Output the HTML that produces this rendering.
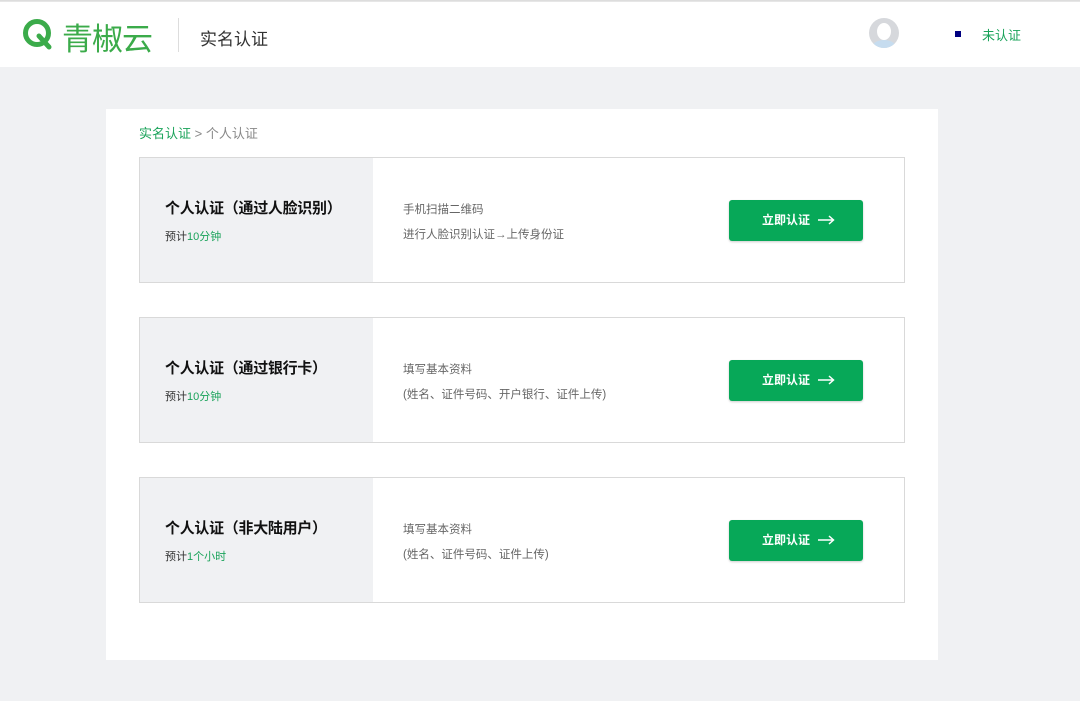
<!DOCTYPE html>
<html><head><meta charset="utf-8"><style>
*{margin:0;padding:0;box-sizing:border-box}
body{width:1080px;height:701px;background:#f0f1f3;font-family:"Liberation Sans","Noto Sans CJK SC",sans-serif;position:relative;overflow:hidden}
.hdr{position:absolute;left:0;top:1px;width:1080px;height:66px;background:#fff;border-top:1px solid #e6e6e6}
.top{position:absolute;left:0;top:0;width:1080px;height:1px;background:#ddd}
.card{position:absolute;left:106px;top:109px;width:832px;height:551px;background:#fff}
.crumb{position:absolute;left:139px;top:123px;font-size:13px;color:#888}
.crumb span{color:#1aa35a}
.box{position:absolute;left:139px;width:766px;height:126px;border:1px solid #d9d9d9;background:#fff}
.box .l{position:absolute;left:0;top:0;width:233px;height:124px;background:#f0f1f3}
.t{position:absolute;left:25px;top:39px;font-size:15px;font-weight:bold;color:#111;letter-spacing:-0.3px}
.s{position:absolute;left:25px;top:70px;font-size:11px;color:#333}
.s b{font-weight:normal;color:#1aa35a}
.d1,.d2{position:absolute;left:263px;font-size:11.5px;color:#666}
.d1{top:43px}.d2{top:68px}
.btn{position:absolute;left:589px;top:42px;width:134px;height:41px;background:#07a858;border-radius:3px;color:#fff;font-size:12px;font-weight:bold;line-height:41px;box-shadow:0 1px 2px rgba(0,0,0,.2)}
.btn span{position:absolute;left:33px;top:0}
.btn svg{position:absolute;left:88px;top:15px}
</style></head><body>
<div class="top"></div>
<div class="hdr">
<svg style="position:absolute;left:22px;top:16px" width="32" height="34" viewBox="0 0 32 34"><circle cx="15" cy="15" r="11.5" fill="none" stroke="#3bab4a" stroke-width="5"/><path d="M17 18 L27 29" stroke="#3bab4a" stroke-width="5" stroke-linecap="round"/></svg>
<div style="position:absolute;left:62px;top:12px;font-size:31px;color:#3bab4a;letter-spacing:-1px">青椒云</div>
<div style="position:absolute;left:178px;top:16px;width:1px;height:34px;background:#ddd"></div>
<div style="position:absolute;left:200px;top:23px;font-size:17px;color:#333">实名认证</div>
<div style="position:absolute;left:869px;top:16px;width:30px;height:30px;border-radius:50%;background:#d6d8dc;overflow:hidden"><div style="position:absolute;left:8px;top:5px;width:14px;height:17px;border-radius:50%;background:#fff"></div><div style="position:absolute;left:4px;top:22px;width:22px;height:12px;border-radius:50%;background:#c6dcef"></div></div>
<div style="position:absolute;left:955px;top:29px;width:6px;height:6px;background:#000080"></div>
<div style="position:absolute;left:982px;top:23px;font-size:13px;color:#1aa35a">未认证</div>
</div>
<div class="card"></div>
<div class="crumb"><span>实名认证</span> &gt; 个人认证</div>
<div class="box" style="top:157px"><div class="l"></div><div class="t">个人认证（通过人脸识别）</div><div class="s">预计<b>10分钟</b></div><div class="d1">手机扫描二维码</div><div class="d2">进行人脸识别认证→上传身份证</div><div class="btn"><span>立即认证</span><svg width="18" height="10" viewBox="0 0 18 10"><path d="M1 5H16M12 1L16.5 5L12 9" fill="none" stroke="#fff" stroke-width="1.5"/></svg></div></div>
<div class="box" style="top:317px"><div class="l"></div><div class="t">个人认证（通过银行卡）</div><div class="s">预计<b>10分钟</b></div><div class="d1">填写基本资料</div><div class="d2">(姓名、证件号码、开户银行、证件上传)</div><div class="btn"><span>立即认证</span><svg width="18" height="10" viewBox="0 0 18 10"><path d="M1 5H16M12 1L16.5 5L12 9" fill="none" stroke="#fff" stroke-width="1.5"/></svg></div></div>
<div class="box" style="top:477px"><div class="l"></div><div class="t">个人认证（非大陆用户）</div><div class="s">预计<b>1个小时</b></div><div class="d1">填写基本资料</div><div class="d2">(姓名、证件号码、证件上传)</div><div class="btn"><span>立即认证</span><svg width="18" height="10" viewBox="0 0 18 10"><path d="M1 5H16M12 1L16.5 5L12 9" fill="none" stroke="#fff" stroke-width="1.5"/></svg></div></div>
</body></html>
